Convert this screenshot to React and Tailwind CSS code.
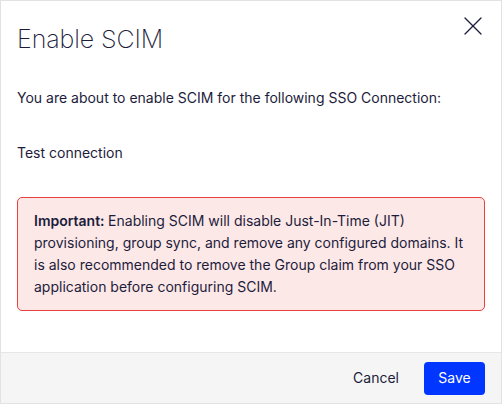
import React from 'react';

const CloseIcon = () => (
  <svg width="18" height="18" viewBox="0 0 18 18" fill="none" stroke="currentColor" strokeWidth="1.3" strokeLinecap="round">
    <path d="M1 1 L17 17" />
    <path d="M17 1 L1 17" />
  </svg>
);

const App = () => {
  return (
    <div className="w-[502px] h-[404px] bg-white border border-[#e2e2e2] flex flex-col text-[#1c1c3b]" style={{ fontFamily: 'Inter, "Noto Sans", sans-serif' }}>
      <div className="flex-1 px-4">
        {/* Header */}
        <div className="flex items-start justify-between pt-[22px]">
          <h2 className="text-[25px] leading-[32px] font-extralight tracking-[-0.1px]">Enable SCIM</h2>
          <button className="mt-[-6px] mr-[3px] text-[#1c1c3b]">
            <CloseIcon />
          </button>
        </div>

        <p className="mt-[33px] text-sm leading-5">
          You are about to enable SCIM for the following SSO Connection:
        </p>

        <p className="mt-[35px] text-sm leading-5">Test connection</p>

        {/* Warning */}
        <div className="mt-[34px] rounded-[5px] border border-[#e8403f] bg-[#fde8e8] px-4 py-3">
          <p className="text-sm leading-[22px]">
            <span className="font-semibold">Important: </span>
            Enabling SCIM will disable Just-In-Time (JIT) provisioning, group sync, and remove any
            configured domains. It is also recommended to remove the Group claim from your SSO
            application before configuring SCIM.
          </p>
        </div>
      </div>

      {/* Footer */}
      <div className="h-[51px] border-t border-[#e6e6e6] bg-[#f5f5f5] flex items-center justify-end gap-[9px] px-4">
        <button className="px-4 h-[33px] text-sm">Cancel</button>
        <button className="h-[33px] w-[61px] rounded-[4px] bg-[#0036ff] text-white text-sm">Save</button>
      </div>
    </div>
  );
};

export default App;
